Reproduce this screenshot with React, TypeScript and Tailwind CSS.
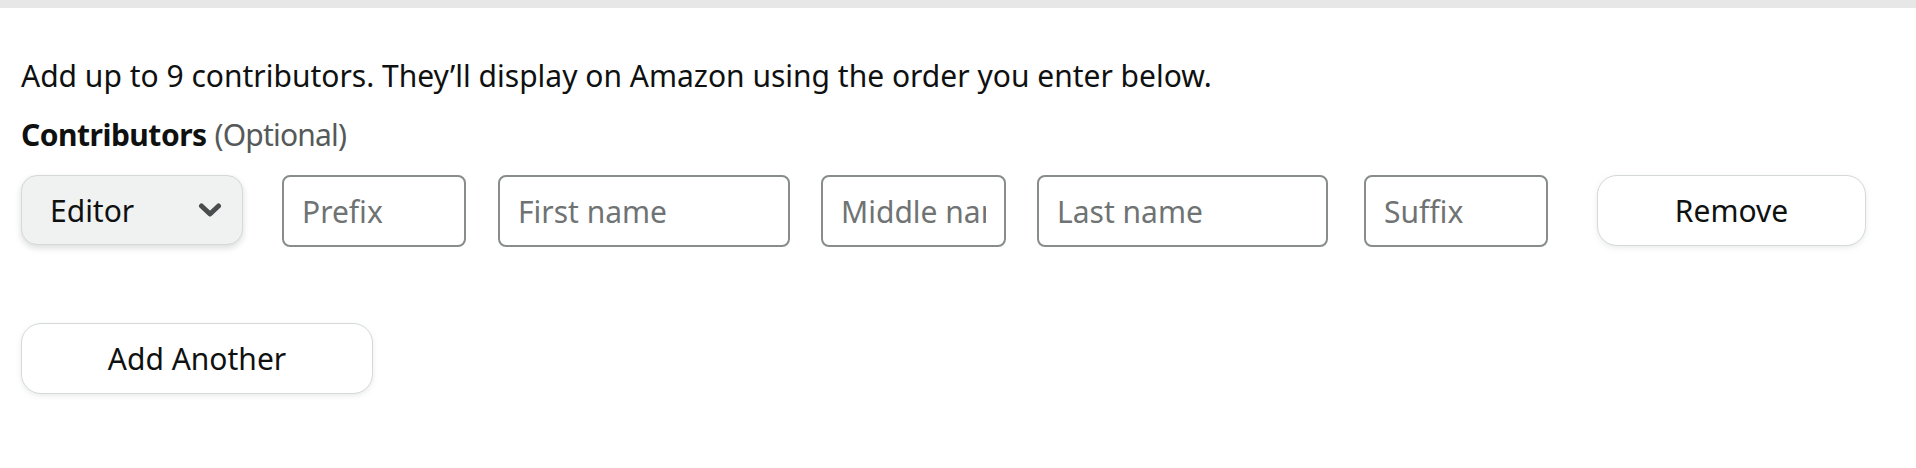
import React from 'react';

const fields = [
  { placeholder: 'Prefix', w: 'w-[184px]', ml: 'ml-[39px]' },
  { placeholder: 'First name', w: 'w-[292px]', ml: 'ml-[32px]' },
  { placeholder: 'Middle name', w: 'w-[185px]', ml: 'ml-[31px]' },
  { placeholder: 'Last name', w: 'w-[291px]', ml: 'ml-[31px]' },
  { placeholder: 'Suffix', w: 'w-[184px]', ml: 'ml-[36px]' },
];

export default function App() {
  return (
    <div className="min-h-screen bg-white text-[#0f1111] font-['Noto_Sans',sans-serif] text-[30px]">
      <div className="h-[8px] bg-[#e7e7e7]" />
      <div className="px-[21px] pt-[48px]">
        <p className="leading-[40px]">
          Add up to 9 contributors. They’ll display on Amazon using the order you enter below.
        </p>
        <div className="mt-[19px] leading-[40px]">
          <span className="font-bold tracking-[-0.5px]">Contributors</span>{' '}
          <span className="text-[#565959] tracking-[-0.8px]">(Optional)</span>
        </div>

        {/* contributor row */}
        <div className="mt-[20px] flex items-start">
          <button className="flex h-[70px] w-[222px] items-center justify-between rounded-[16px] border border-[#d5d9d9] bg-[#f0f2f2] pl-[28px] pr-[20px] shadow-[0_3px_6px_rgba(15,17,17,0.15)]">
            <span>Editor</span>
            <svg width="24" height="16" viewBox="0 0 24 16" fill="none">
              <path d="M3.5 4 L12 12 L20.5 4" stroke="#4a4d4d" strokeWidth="5" strokeLinecap="round" strokeLinejoin="round" />
            </svg>
          </button>
          {fields.map(f => (
            <input
              key={f.placeholder}
              placeholder={f.placeholder}
              className={`${f.w} ${f.ml} h-[72px] rounded-[8px] border-2 border-[#888c8c] px-[18px] text-[30px] placeholder:text-[#6f7373] outline-none`}
            />
          ))}
          <button className="ml-[49px] h-[71px] w-[269px] rounded-[20px] border border-[#d5d9d9] bg-white shadow-[0_2px_5px_rgba(213,217,217,0.5)]">
            Remove
          </button>
        </div>

        <button className="mt-[76px] h-[71px] w-[352px] rounded-[20px] border border-[#d5d9d9] bg-white shadow-[0_2px_5px_rgba(213,217,217,0.5)]">
          Add Another
        </button>
      </div>
    </div>
  );
}
